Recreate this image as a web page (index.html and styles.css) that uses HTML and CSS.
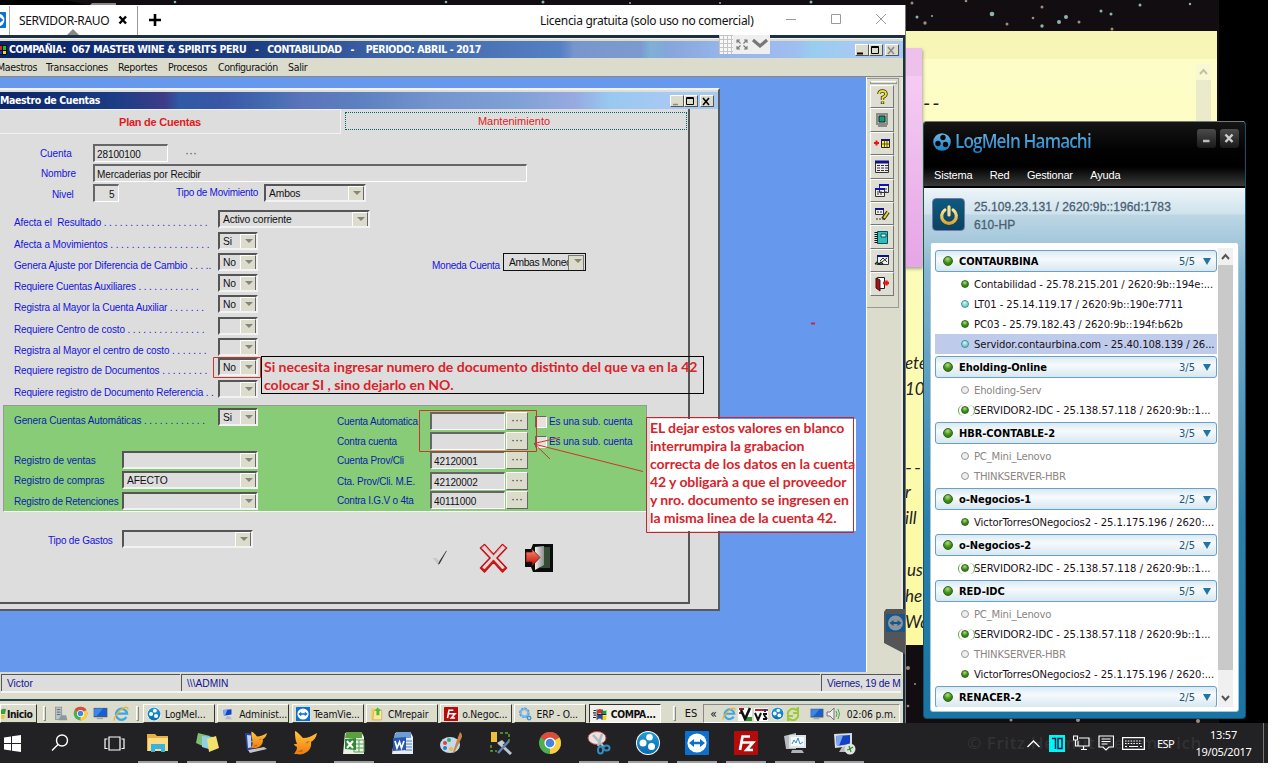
FILE: index.html
```html
<!DOCTYPE html>
<html lang="es">
<head>
<meta charset="utf-8">
<title>SERVIDOR-RAUO</title>
<link rel="stylesheet" href="styles.css">
</head>
<body>
<svg class="defs" width="0" height="0">
<defs>
<linearGradient id="gBlue" x1="0" y1="0" x2="0" y2="1"><stop offset="0" stop-color="#1d9cdc"/><stop offset="1" stop-color="#0a6cae"/></linearGradient>
<linearGradient id="gLogo" x1="0" y1="0" x2="0" y2="1"><stop offset="0" stop-color="#6db8e6"/><stop offset="1" stop-color="#1b7ec2"/></linearGradient>
<linearGradient id="gGold" x1="0" y1="0" x2="0" y2="1"><stop offset="0" stop-color="#ffe79a"/><stop offset="1" stop-color="#e0a52a"/></linearGradient>
<linearGradient id="gFox" x1="0" y1="0" x2="0" y2="1"><stop offset="0" stop-color="#ffc93c"/><stop offset="1" stop-color="#f07a10"/></linearGradient>
<linearGradient id="gDoor" x1="0" y1="0" x2="1" y2="0"><stop offset="0" stop-color="#eee"/><stop offset="1" stop-color="#8d908c"/></linearGradient>
<linearGradient id="gRed" x1="0" y1="0" x2="0" y2="1"><stop offset="0" stop-color="#ff8a70"/><stop offset="1" stop-color="#b80a00"/></linearGradient>
<symbol id="hamachi" viewBox="0 0 24 24"><circle cx="12" cy="12" r="12" fill="#fff"/><circle cx="12" cy="12" r="11" fill="url(#gBlue)"/><circle cx="13.5" cy="6.3" r="3.3" fill="#fff"/><circle cx="7" cy="12" r="3.5" fill="#fff"/><circle cx="15.500" cy="15.5" r="3.5" fill="#fff"/></symbol>
<symbol id="teamviewer" viewBox="0 0 24 24"><rect width="24" height="24" rx="1" fill="#0d6fd0"/><circle cx="12" cy="12" r="9.6" fill="#fff"/><path d="M4 12l5-4v2.800h6V8l5 4-5 4v-2.800H9V16z" fill="#0d6fd0"/></symbol>
<symbol id="filezilla" viewBox="0 0 24 24"><rect width="24" height="24" rx="1" fill="#b50b0b"/><path d="M6 19L8.500 5.500H16M7.500 11.500h5M12 11.500h7L12.500 19H19" fill="none" stroke="#fff" stroke-width="2.700"/></symbol>
<symbol id="chrome" viewBox="0 0 24 24"><circle cx="12" cy="12" r="11" fill="#4caf50"/><path d="M12 12L2.500 6.500A11 11 0 0 1 21.500 6.500z" fill="#dd4b3a"/><path d="M12 12L21.500 6.500A11 11 0 0 1 12 23z" fill="#fdce3f"/><circle cx="12" cy="12" r="5.600" fill="#fff"/><circle cx="12" cy="12" r="4.300" fill="#4285e4"/></symbol>
<symbol id="ie" viewBox="0 0 24 24"><path d="M20 16.500a8.300 8.300 0 1 1 1-5H6" fill="none" stroke="#37a8e8" stroke-width="3.600"/><path d="M2 22C0 18 9 6 17 2.500c4-1.500 6 0 5 3" fill="none" stroke="#eeb32c" stroke-width="2"/></symbol>
<symbol id="fox" viewBox="0 0 24 24"><path d="M2 0c3 1 6 5 8 7 5 0 9-2 14-5-1 5-3 7-6 9 1 5-2 10-8 12-3 1-7 0-9 0 2-3 3-4 3-7-2-1-3-2-3-3h3C2 9 2 4 2 0z" fill="url(#gFox)"/><path d="M13 11l4-1-3 2.500zM4 21l5-2.500 1 2" fill="#b86414"/></symbol>
<symbol id="monitor" viewBox="0 0 24 24"><path d="M2 3l18-1v13L3 17z" fill="#d9dde0"/><path d="M4 5l14-1v9L5 15z" fill="#1541c4"/><path d="M4 5l7-.500L7 15H5z" fill="#7ba7f0"/><path d="M10 16h5l4 5H7z" fill="#b6babd"/></symbol>
<symbol id="desk" viewBox="0 0 24 24"><path d="M1 3h22v15H1z" fill="#4a5d70"/><path d="M2 4h20v12H2z" fill="#1a5fd0"/><path d="M2 4h14L6 16H2z" fill="#3f86ea"/><path d="M6 20h10" stroke="#9aa" stroke-width="2"/></symbol>
<symbol id="server" viewBox="0 0 24 24"><rect x="4" y="1" width="10" height="20" fill="#bcc3c6" stroke="#78828a"/><path d="M6 5h6M6 9h6M6 13h6" stroke="#5a6770" stroke-width="1.500"/><path d="M8 22l5-8h8l2 8z" fill="#8b98a2"/></symbol>
<symbol id="winflag" viewBox="0 0 24 24"><path d="M8 5q4-3 7 0v7q-3-3-7 0z" fill="#e32a20"/><path d="M16 5q4 3 7 0v7q-3 3-7 0z" fill="#17a03b"/><path d="M8 14q4-3 7 0v7q-3-3-7 0z" fill="#2345c9"/><path d="M16 14q4 3 7 0v7q-3 3-7 0z" fill="#f2d21c"/><path d="M7 4v18M15.500 4v18M7 13h16" stroke="#111" stroke-width="1.500" fill="none"/><path d="M1 6h4M0 10h5M1 14h4M0 18h5" stroke="#223" stroke-width="2"/></symbol>
<symbol id="gear" viewBox="0 0 24 24"><circle cx="11" cy="10" r="7" fill="none" stroke="#4b93d3" stroke-width="4" stroke-dasharray="4 1.300"/><circle cx="11" cy="10" r="6" fill="none" stroke="#7bb8ea" stroke-width="3"/><circle cx="19" cy="19" r="3" fill="none" stroke="#4b93d3" stroke-width="2.500"/></symbol>
<symbol id="folder" viewBox="0 0 24 24"><path d="M2 3h14v20H2z" fill="#f0cf67"/><path d="M7 5h13v17H5z" fill="#fbe9a2" stroke="#c79d31"/><path d="M13 1l6 6h-3v7h-5V7H8z" fill="#50bb32"/></symbol>
<symbol id="power" viewBox="0 0 24 24"><path d="M7.500 6.500a8 8 0 1 0 9 0" fill="none" stroke="url(#gGold)" stroke-width="3.500" stroke-linecap="round"/><path d="M12 3v9" stroke="#ffe08a" stroke-width="3.500" stroke-linecap="round"/></symbol>
</defs>
</svg>
<main class="desktop">
<svg class="stars" width="1268" height="763"><g fill="#8fb3b0"><circle cx="917" cy="17" r="1.500"/><circle cx="932" cy="16" r="1"/><circle cx="992" cy="14" r="2.300"/><circle cx="1066" cy="17" r="2"/><circle cx="1059" cy="22" r="2"/><circle cx="1101" cy="11" r="1.500"/><circle cx="1111" cy="14" r="1.500"/><circle cx="1140" cy="5" r="1.500"/><circle cx="1190" cy="4" r="1.200"/><circle cx="1042" cy="26" r="1.700"/><circle cx="175" cy="2" r="1.300"/><circle cx="446" cy="2" r="1.300"/><circle cx="543" cy="2" r="1.500"/><circle cx="630" cy="3" r="1"/><circle cx="720" cy="3" r="1"/><circle cx="811" cy="2" r="1.500"/></g><g fill="#a18b7c"><circle cx="912" cy="3" r="1.500"/><circle cx="925" cy="23" r="1.700"/><circle cx="1007" cy="24" r="1.500"/><circle cx="1033" cy="18" r="1.300"/><circle cx="1079" cy="22" r="1.500"/><circle cx="966" cy="1" r="1.300"/><circle cx="1042" cy="7" r="1.500"/><circle cx="1112" cy="29" r="1.500"/><circle cx="908" cy="668" r="2"/><circle cx="915" cy="684" r="1"/><circle cx="908" cy="706" r="1.300"/><circle cx="1011" cy="720" r="1.500"/><circle cx="1078" cy="720" r="2"/><circle cx="1198" cy="721" r="2"/></g><path d="M1219 0h49v763h-49z" fill="#000"/><path d="M0 0h65l22 5H0z" fill="#000"/><path d="M92 3h24v2H90z" fill="#888"/></svg>

<section class="note yellow">
  <div class="note-head"></div>
  <div class="note-body">
    <div class="note-text"><p class="dashes">--</p><p class="n2">ete</p><p class="n3">10</p><p class="n4">--</p><p class="n5">r</p><p class="n6">ill</p><p class="n7">us</p><p class="n8">he</p><p class="n9">Wa</p></div>
    <div class="note-scroll"><svg width="15" height="16"><path d="M4 10l3.500-4 3.500 4" fill="none" stroke="#c3c29c" stroke-width="2"/></svg></div>
  </div>
</section>
<section class="note pink"><div class="note-head"></div></section>

<section class="tv">
  <header class="tv-tabs">
    <div class="tv-logo"><svg width="16" height="16"><use href="#teamviewer"/></svg></div>
    <div class="tv-tab"><span class="t-tab">SERVIDOR-RAUO</span><svg width="10" height="10"><path d="M1.500 1.500l6.500 7M8 1.500l-6.500 7" stroke="#000" stroke-width="2.400"/></svg><i class="notch"></i></div>
    <div class="tv-plus"><svg width="12" height="12"><path d="M6 0v12M0 6h12" stroke="#000" stroke-width="2.600"/></svg></div>
    <span class="t-lic">Licencia gratuita (solo uso no comercial)</span>
    <svg class="tv-ctl" width="106" height="14" fill="none" stroke="#999"><path d="M0 6.500h10M45.500 1.500h9v9h-9zM90 1l10 10M100 1L90 11"/></svg>
  </header>
  <div class="remote">
    <div class="r-title"><svg width="9" height="12"><rect x="0" y="1" width="7" height="10" fill="#111"/><path d="M0 2h2v4H0z" fill="#d22"/><path d="M3 2h3v4H3z" fill="#2b2"/><path d="M3 7h3v3H3z" fill="#dd2"/><path d="M0 7h2v3H0z" fill="#23c"/></svg><span class="t-comp">COMPAÑIA:&nbsp; 067 MASTER WINE &amp; SPIRITS PERU&nbsp;&nbsp; -&nbsp;&nbsp; CONTABILIDAD&nbsp;&nbsp; -&nbsp;&nbsp;&nbsp; PERIODO: ABRIL - 2017</span>
      <div class="w-btns"><b class="wb"><svg width="13" height="11"><path d="M2 8.500h6" stroke="#000" stroke-width="2"/></svg></b><b class="wb"><svg width="13" height="11"><path d="M2.500 1.500h7v7h-7zM2 2.500h8" fill="none" stroke="#000"/></svg></b><b class="wb gap"><svg width="13" height="11"><path d="M3 2l6 7M9 2L3 9" stroke="#888" stroke-width="1.500"/></svg></b></div>
    </div>
    <nav class="r-menu"><span class="m1">Maestros</span><span class="m2">Transacciones</span><span class="m3">Reportes</span><span class="m4">Procesos</span><span class="m5">Configuración</span><span class="m6">Salir</span></nav>
    <div class="mdi">
      <div class="mdi-area">
        <section class="dialog">
          <div class="d-title"><span>Maestro de Cuentas</span><div class="w-btns"><b class="wb"><svg width="13" height="11"><path d="M3 8.500h5" stroke="#888" stroke-width="1.500"/></svg></b><b class="wb"><svg width="13" height="11"><path d="M2.500 1.500h7v7h-7zM2 2.500h8" fill="none" stroke="#000"/></svg></b><b class="wb gap"><svg width="13" height="11"><path d="M3 2l6 7M9 2L3 9" stroke="#000" stroke-width="1.600"/></svg></b></div></div>
          <div class="panel">
            <div class="tabs"><div class="tab on">Plan de Cuentas</div><div class="tab focus">Mantenimiento</div></div>
            <div class="row r1"><label class="lb a1">Cuenta</label><div class="fld w75">28100100</div><span class="dots">···</span></div>
            <div class="row r2"><label class="lb a2">Nombre</label><div class="fld w433">Mercaderias por Recibir</div></div>
            <div class="row r3"><label class="lb a3">Nivel</label><div class="fld w26">5</div><label class="lb a4">Tipo de Movimiento</label><div class="combo w101">Ambos</div></div>
            <div class="split">
              <div class="opts">
                <div class="row"><label class="lb"><span class="s1">Afecta el&nbsp; Resultado . . . . . . . . . . . . . . . . . . . .</span></label><div class="combo w151">Activo corriente</div></div>
                <div class="row"><label class="lb"><span class="s2">Afecta a Movimientos . . . . . . . . . . . . . . . . . . .</span></label><div class="combo w40">Si</div></div>
                <div class="row"><label class="lb"><span class="s3">Genera Ajuste por Diferencia de Cambio . . . ..</span></label><div class="combo w40">No</div></div>
                <div class="row"><label class="lb"><span class="s4">Requiere Cuentas Auxiliares . . . . . . . . . . . .</span></label><div class="combo w40">No</div></div>
                <div class="row"><label class="lb"><span class="s5">Registra al Mayor la Cuenta Auxiliar . . . . . . .</span></label><div class="combo w40">No</div></div>
                <div class="row"><label class="lb"><span class="s6">Requiere Centro de costo . . . . . . . . . . . . . . .</span></label><div class="combo w40"></div></div>
                <div class="row"><label class="lb"><span class="s7">Registra al Mayor el centro de costo . . . . . . .</span></label><div class="combo w40"></div></div>
                <div class="row"><label class="lb"><span class="s8">Requiere registro de Documentos . . . . . . . . .</span></label><div class="combo w40">No</div></div>
                <div class="row"><label class="lb"><span class="s9">Requiere registro de Documento Referencia . .</span></label><div class="combo w40"></div></div>
              </div>
              <div class="row moneda"><label class="lb">Moneda Cuenta</label><div class="combo flat">Ambas Monec</div></div>
            </div>
            <div class="green">
              <div class="g-left">
                <div class="row g1"><label class="lb"><span class="s10">Genera Cuentas Automáticas . . . . . . . . . . . .</span></label><div class="combo w40">Si</div></div>
                <div class="row g2"><label class="lb"><span>Registro de ventas</span></label><div class="combo w136"></div></div>
                <div class="row g3"><label class="lb"><span>Registro de compras</span></label><div class="combo w136">AFECTO</div></div>
                <div class="row g4"><label class="lb"><span class="s11">Registro de Retenciones</span></label><div class="combo w136"></div></div>
              </div>
              <div class="g-right">
                <div class="row"><label class="lb">Cuenta Automatica</label><div class="fld w75"></div><b class="btn">···</b><i class="chk"></i><label class="lb sub">Es una sub. cuenta</label></div>
                <div class="row"><label class="lb">Contra cuenta</label><div class="fld w75"></div><b class="btn">···</b><i class="chk"></i><label class="lb sub">Es una sub. cuenta</label></div>
                <div class="row"><label class="lb">Cuenta Prov/Cli</label><div class="fld w75">42120001</div><b class="btn">···</b></div>
                <div class="row"><label class="lb">Cta. Prov/Cli. M.E.</label><div class="fld w75">42120002</div><b class="btn">···</b></div>
                <div class="row"><label class="lb">Contra I.G.V o 4ta</label><div class="fld w75">40111000</div><b class="btn">···</b></div>
              </div>
            </div>
            <div class="foot">
              <div class="row"><label class="lb">Tipo de Gastos</label><div class="combo w131"></div></div>
              <div class="acts">
                <svg width="15" height="16"><path d="M0 8l5 7 1-4-3-3z" fill="#c6c6c6"/><path d="M5 14.500L6.500 11 13 1 14 .5 6.500 14z" fill="#333"/></svg>
                <svg width="29" height="30" stroke-linejoin="round"><path d="M1.500 5l4-3.500 9 10 9-10 4 3.500-9.500 10 9.500 10-4 4-9-10-9 10-4-4L11 15z" fill="#e0d8d8" stroke="#c50d12" stroke-width="1.600"/><path d="M2.500 24.500l3 3 9-10 9 10 3-3" fill="none" stroke="#d01a1a" stroke-width="1.500"/><path d="M2.500 5l3-2.500 9 10 9-10 3 2.500" fill="none" stroke="#f59a96" stroke-width="1"/></svg>
                <svg width="30" height="30"><path d="M9 1h20v28H9l-2-5H1V6h6z" fill="#0a0d0a"/><path d="M20 4h6v21H16z" fill="#344b34"/><path d="M11 4l9-1v19l-9 5z" fill="url(#gDoor)"/><path d="M2 9h6V6l8 8.500L8 23v-4H2z" fill="url(#gRed)" stroke="#5b0b05" stroke-width=".7"/></svg>
              </div>
            </div>
          </div>
        </section>
      </div>
      <aside class="tools">
        <div class="tools-box"><div class="grip"></div>
        <b><svg width="16" height="16"><path d="M5 5q0-3 3.500-3T12 5q0 2-3.500 3.500V11M8.500 12.500v2.500" fill="none" stroke="#332" stroke-width="3.400"/><path d="M5 5q0-3 3.500-3T12 5q0 2-3.500 3.500V11M8.500 12.800v1.800" fill="none" stroke="#eee02c" stroke-width="1.800"/></svg></b>
        <b><svg width="16" height="16"><path d="M3 2h10v10H3zM4 14h9" fill="#c3c3bd" stroke="#8b8b87" stroke-width="2"/><path d="M5 4h6v6H5z" fill="#0d9a74" stroke="#122"/></svg></b>
        <b><svg width="16" height="16"><path d="M0 8h5M2.500 5.500v5" stroke="#f01515" stroke-width="2"/><path d="M7.500 4.500h8v8h-8z" fill="#ffef35" stroke="#222"/><path d="M7 5h9" stroke="#118" stroke-width="2"/><path d="M10.500 6v6M13 6v6M8 9h8" stroke="#222" stroke-width=".7"/></svg></b>
        <b><svg width="16" height="16"><path d="M1.500 2.500h13v11h-13z" fill="#eee" stroke="#333"/><path d="M1 3h14" stroke="#118" stroke-width="3"/><path d="M3 6.500h11M3 9h11M3 11.500h11" stroke="#333" stroke-dasharray="3 1"/></svg></b>
        <b><svg width="16" height="16"><path d="M5.500 2.500h9v8h-9zM1.500 6.500h9v8h-9z" fill="#eee" stroke="#333"/><path d="M5 3h10M1 7h10" stroke="#11b" stroke-width="2"/><path d="M3 10h6M3 12h6M12 6v4" stroke="#333" stroke-dasharray="2 1"/></svg></b>
        <b><svg width="16" height="16"><path d="M1.500 2.500h8v6h-8z" fill="#eee" stroke="#333"/><path d="M1 3h9" stroke="#118" stroke-width="2"/><path d="M3 6h6M2 13h9" stroke="#333" stroke-dasharray="2 1"/><path d="M14 6l-5 7" stroke="#332" stroke-width="4"/><path d="M14 6l-4 6" stroke="#e6d62d" stroke-width="2"/></svg></b>
        <b><svg width="16" height="16"><path d="M3.500 2.500h10v12h-10z" fill="#3bb" stroke="#055"/><path d="M2 3v11" stroke="#111" stroke-width="3" stroke-dasharray="1 1"/><path d="M7 5h5v3H7z" fill="#dff" stroke="#055"/></svg></b>
        <b><svg width="16" height="16"><path d="M3.500 3.500h11v9h-11z" fill="#eee" stroke="#333"/><path d="M3 4h12" stroke="#118" stroke-width="2"/><path d="M6 9l3-3 4 4M8 10l5-4" stroke="#333" fill="none"/><path d="M1 12q2-4 4 0 2-4 4 0z" fill="#3bb" stroke="#111"/></svg></b>
        <b><svg width="16" height="16"><path d="M3.500 1.500h7v11h-7z" fill="#fff" stroke="#222"/><path d="M2 2l4 2v11l-4-3z" fill="#a01414" stroke="#411"/><path d="M9 7h6M12.500 4.500v5" stroke="#f01515" stroke-width="2.400"/></svg></b>
        </div>
      </aside>
    </div>
    <div class="status"><span class="c1">Victor</span><span class="c2">\\\ADMIN</span><span class="c3">Viernes, 19 de M</span></div>
    <footer class="xp">
      <b class="start"><svg width="6" height="12"><path d="M0 2q2-2 5-1L4 6H0z" fill="#3ba03b"/><path d="M0 7h4l-1 4H0z" fill="#edc52c"/></svg>Inicio</b>
      <i class="sep"></i>
      <div class="ql"><svg width="15" height="16"><use href="#server"/></svg><svg width="15" height="15"><use href="#chrome"/></svg><svg width="15" height="15"><use href="#desk"/></svg><svg width="16" height="16"><use href="#ie"/></svg></div>
      <i class="sep s2"></i>
      <div class="tasks">
      <b><svg width="14" height="14"><use href="#hamachi"/></svg><span>LogMeI...</span></b>
      <b><svg width="14" height="14"><use href="#monitor"/></svg><span>Administ...</span></b>
      <b><svg width="14" height="14"><use href="#teamviewer"/></svg><span>TeamVie...</span></b>
      <b><svg width="14" height="14"><use href="#folder"/></svg><span>CMrepair</span></b>
      <b><svg width="14" height="14"><use href="#filezilla"/></svg><span>o.Negoc...</span></b>
      <b><svg width="14" height="14"><use href="#gear"/></svg><span>ERP - O...</span></b>
      <b class="down"><svg width="14" height="14"><use href="#winflag"/></svg><span>COMPA...</span></b>
      </div>
      <i class="sep s3"></i><span class="es">ES</span>
      <div class="xtray"><span>«</span><svg width="14" height="14"><use href="#ie"/></svg><svg width="14" height="14"><path d="M0 1h14v13H0z" fill="#fff"/><path d="M8 14h6v-4H8z" fill="#393"/><path d="M1 2h5M1 6h3" stroke="#922" stroke-width="2"/><path d="M3 3l4 9 5-11" fill="none" stroke="#111" stroke-width="2.600"/></svg><svg width="15" height="14"><path d="M0 1h14v13H0z" fill="#fff"/><path d="M1 3h13" stroke="#b22" stroke-width="2"/><path d="M10 2h2v3h-2z" fill="#22b"/><path d="M1 6l3 7 3-7M9 7h4M9 12h4M10 8l3 4" fill="none" stroke="#111" stroke-width="2"/></svg><svg width="13" height="13"><use href="#hamachi"/></svg><svg width="14" height="14"><path d="M2 8a5 5 0 0 1 8-5l2-2v5H7M12 7a5 5 0 0 1-8 5l-2 2V9h5" fill="none" stroke="#9c3" stroke-width="2"/></svg><svg class="sp" width="14" height="14"><use href="#desk"/></svg><svg width="15" height="14"><path d="M1 5h3l4-4v12L4 9H1z" fill="#eee" stroke="#777"/><path d="M10 4q2 3 0 6M12 2q3 5 0 10" fill="none" stroke="#4a4"/></svg><span class="clk">02:06 p.m.</span></div>
    </footer>
  </div>
  <div class="fs"><i></i><svg width="37" height="18" fill="none" stroke="#777"><path d="M4 8V5h3M11 5h3v3M14 11v3h-3M7 14H4v-3M4.500 5.500l3 3M13.500 5.500l-3 3M13.500 13.500l-3-3M4.500 13.500l3-3" stroke-width="1.100"/><path d="M20 5l7 6 7-6" stroke-width="3.200" stroke="#777"/></svg></div>
  <div class="tv-grip"><svg width="22" height="46"><path d="M3 1h19v45L1 35V4z" fill="#535557"/><rect x="3" y="6" width="19" height="18" fill="#15568c"/><circle cx="12.500" cy="15" r="7.500" fill="#8d9499"/><path d="M6.500 15l4-3v2h4v-2l4 3-4 3v-2h-4v2z" fill="#15568c"/></svg></div>
</section>

<div class="ann ann1">Si necesita ingresar numero de documento distinto del que va en la 42<br>colocar SI , sino dejarlo en NO.</div>
<div class="ann ann2"><div>EL dejar estos valores en blanco<br>interrumpira la grabacion<br>correcta de los datos en la cuenta<br>42 y obligarà a que el proveedor<br>y nro. documento se ingresen en<br>la misma linea de la cuenta 42.</div></div>
<svg class="marks" width="900" height="600" fill="none" stroke="#c9372c"><path d="M213.500 357.500h47v20h-47z"/><path d="M419.500 410.500h117v41h-117zM643 471.500L534 444M560 437.500L534 443.500 550 459"/><path d="M646.500 417.500h207v115h-207z" stroke="#c9232c"/><path d="M811 323.500h4" stroke="#c22b44" stroke-width="2"/></svg>

<section class="ham">
  <header class="h-head">
    <div class="h-brand"><svg width="18" height="18" viewBox="0 0 18 18"><circle cx="9" cy="9" r="8.800" fill="url(#gLogo)"/><circle cx="10" cy="4.500" r="2.700" fill="#06090c"/><circle cx="5" cy="10.500" r="2.700" fill="#06090c"/><circle cx="12.500" cy="11.500" r="2.700" fill="#06090c"/></svg><span class="h-logo">LogMeIn Hamachi</span><div class="h-ctl"><b><svg width="18" height="18"><path d="M6 12h6.500" stroke="#bbb" stroke-width="2.600"/></svg></b><b><svg width="18" height="18"><path d="M5.500 5.500l7 7.500M12.500 5.500l-7 7.500" stroke="#ccc" stroke-width="2.500"/></svg></b></div></div>
    <nav class="h-nav"><span>Sistema</span><span>Red</span><span>Gestionar</span><span>Ayuda</span></nav>
  </header>
  <div class="h-info"><div class="h-pow"><svg width="22" height="22"><use href="#power"/></svg></div><div class="h-ip">25.109.23.131 / 2620:9b::196d:1783<br><span>610-HP</span></div></div>
  <div class="h-list">
    <div class="h-groups">
      <div class="grp"><h4><i class="dot"></i><span>CONTAURBINA</span><em>5/5</em><i class="tri"></i></h4><p><i class="dot"></i><span class="l1">Contabilidad - 25.78.215.201 / 2620:9b::194e:...</span></p><p><i class="dot cy"></i><span>LT01 - 25.14.119.17 / 2620:9b::190e:7711</span></p><p><i class="dot"></i><span>PC03 - 25.79.182.43 / 2620:9b::194f:b62b</span></p><p class="sel"><i class="dot cy"></i><span>Servidor.contaurbina.com - 25.40.108.139 / 26...</span></p></div>
      <div class="grp"><h4><i class="dot"></i><span>Eholding-Online</span><em>3/5</em><i class="tri"></i></h4><p class="off"><i class="dot"></i><span>Eholding-Serv</span></p><p><i class="dot par"></i><span class="l2">SERVIDOR2-IDC - 25.138.57.118 / 2620:9b::1...</span></p></div>
      <div class="grp"><h4><i class="dot"></i><span>HBR-CONTABLE-2</span><em>3/5</em><i class="tri"></i></h4><p class="off"><i class="dot"></i><span>PC_Mini_Lenovo</span></p><p class="off"><i class="dot"></i><span>THINKSERVER-HBR</span></p></div>
      <div class="grp"><h4><i class="dot"></i><span>o-Negocios-1</span><em>2/5</em><i class="tri"></i></h4><p><i class="dot"></i><span>VictorTorresONegocios2 - 25.1.175.196 / 2620:...</span></p></div>
      <div class="grp"><h4><i class="dot"></i><span>o-Negocios-2</span><em>2/5</em><i class="tri"></i></h4><p><i class="dot par"></i><span class="l2">SERVIDOR2-IDC - 25.138.57.118 / 2620:9b::1...</span></p></div>
      <div class="grp"><h4><i class="dot"></i><span>RED-IDC</span><em>5/5</em><i class="tri"></i></h4><p class="off"><i class="dot"></i><span>PC_Mini_Lenovo</span></p><p><i class="dot par"></i><span class="l2">SERVIDOR2-IDC - 25.138.57.118 / 2620:9b::1...</span></p><p class="off"><i class="dot"></i><span>THINKSERVER-HBR</span></p><p><i class="dot"></i><span>VictorTorresONegocios2 - 25.1.175.196 / 2620:...</span></p></div>
      <div class="grp"><h4><i class="dot"></i><span>RENACER-2</span><em>2/5</em><i class="tri"></i></h4></div>
    </div>
    <div class="h-scroll"><svg width="15" height="17"><path d="M4 11l3.500-4 3.500 4" fill="none" stroke="#555" stroke-width="2"/></svg><i></i><svg width="15" height="37"><path d="M4 26l3.500 4 3.500-4" fill="none" stroke="#555" stroke-width="2"/></svg></div>
  </div>
</section>

<footer class="w10">
  <div class="apps">
    <b class="b1"><svg width="17" height="17" fill="#fff"><path d="M0 2.500L7 1.500V8H0zM8 1.300L17 0v8H8zM0 9h7v6.500L0 14.500zM8 9h9v8l-9-1.300z"/></svg></b>
    <b class="b2"><svg width="18" height="18" fill="none" stroke="#fff" stroke-width="1.400"><circle cx="11" cy="6.500" r="5.500"/><path d="M7 10.500l-6 6"/></svg></b>
    <b class="b3"><svg width="21" height="15" fill="none" stroke="#fff" stroke-width="1.200"><path d="M5 1h11v13H5zM3.500 3H1v9.500h2.500M17.500 3H20v9.500h-2.500"/></svg></b>
    <b class="open"><svg width="24" height="24"><path d="M1 3h8l2 2h11v15H1z" fill="#e5b144"/><path d="M2 7h20v13H2z" fill="#fbdc83"/><path d="M5 21v-8h14v8h-4v-3H9v3z" fill="#36b2e4"/></svg></b>
    <b class="open"><svg width="24" height="24"><path d="M3 2l12 3-3 12-11-5z" fill="#7fbf75"/><path d="M7 5l12 1-2 13-10-3z" fill="#8fd0e6"/><path d="M12 8l9-3 3 12-10 4z" fill="#f3e16c"/></svg></b>
    <b class="open"><svg width="24" height="24"><path d="M1 2l11 1v14l-9 2z" fill="#2747a8"/><path d="M3 4l4 .5v12l-3 .5z" fill="#c2d2f5"/><path d="M4 19l16-3 3 2-17 4z" fill="#c3c5c8"/><use href="#fox" x="6" y="0" width="17" height="18"/></svg></b>
    <b><svg width="24" height="24"><use href="#fox"/></svg></b>
    <b class="open"><svg width="24" height="24"><path d="M3 2h17l2 4v17H1z" fill="#e9f1e5"/><path d="M4 1h16v6H3z" fill="#5c9f3f"/><path d="M12 9h10v12H12zM12 13h10M12 17h10M17 9v12" fill="none" stroke="#58a05b"/><path d="M3 8l11-1v12L3 18z" fill="#2e8a38"/><path d="M5 10l6 7M11 10l-6 7" stroke="#fff" stroke-width="2"/></svg></b>
    <b><svg width="24" height="24"><path d="M4 2h16l2 4v17H1z" fill="#e6edf6"/><path d="M5 1h15v6H3z" fill="#6f9cd6"/><path d="M14 10h7M14 13h7M14 16h7M14 19h7" stroke="#4b7fc6"/><path d="M2 7l13-1v13L2 20z" fill="#2759a8"/><path d="M4 10l2 7 2.500-6 2 6 2.500-7" fill="none" stroke="#fff" stroke-width="1.700"/></svg></b>
    <b><svg width="24" height="24"><ellipse cx="10" cy="14" rx="10" ry="8" fill="#c4daea"/><circle cx="5" cy="12" r="2" fill="#d43"/><circle cx="9" cy="9" r="2" fill="#3a7"/><circle cx="5" cy="17" r="2" fill="#37c"/><circle cx="11" cy="18" r="2" fill="#eb3"/><path d="M20 1q4 3 0 9L14 22l-1-1 4-12z" fill="#c98444"/></svg></b>
    <b><svg width="24" height="24"><path d="M2 1h6v10H2z" fill="#f0bd38"/><path d="M11 2h9v8M2 14v6h6" fill="none" stroke="#5a3" stroke-dasharray="3 2" stroke-width="1.500"/><path d="M10 12l12 11" stroke="#b9c4cf" stroke-width="3"/><path d="M20 10L9 22" stroke="#5f84b1" stroke-width="2.500"/><path d="M8 12l5-3 3 3-4 3z" fill="#c7cdd3"/></svg></b>
    <b><svg width="24" height="24"><use href="#chrome"/></svg></b>
    <b class="open"><svg width="24" height="24"><ellipse cx="10" cy="7" rx="9" ry="6.500" fill="#e9e4e4" stroke="#c14545"/><path d="M6 4l11 12M15 3l-4 12" stroke="#b3b8bd" stroke-width="2.500"/><ellipse cx="13.500" cy="19" rx="2.500" ry="3.500" fill="none" stroke="#328dbd" stroke-width="2"/><ellipse cx="19.500" cy="17" rx="3" ry="2.500" fill="none" stroke="#328dbd" stroke-width="2"/></svg></b>
    <b class="open"><svg width="24" height="24"><use href="#hamachi"/></svg></b>
    <b class="open"><svg width="24" height="24"><use href="#teamviewer"/></svg></b>
    <b class="open"><svg width="24" height="24"><use href="#filezilla"/></svg></b>
    <b class="open"><svg width="24" height="24"><path d="M1 5l12-3v16H3z" fill="#b7bdc1"/><path d="M6 4h17v13H6z" fill="#dfe3e6"/><path d="M8 6h13v9H8z" fill="#f5fafc"/><path d="M9 13l2-4 2 3 2-5 2 6 3-2" fill="none" stroke="#3a8fc0"/><path d="M9 19h10l2 3H8z" fill="#aeb4b7"/></svg></b>
    <b class="open"><svg width="24" height="24"><use href="#monitor"/><circle cx="18" cy="18" r="5.500" fill="#dfe6df"/><path d="M15 19l3-1-1-3M21 16l-3 2 1 3" fill="none" stroke="#3a8b3a" stroke-width="1.300"/></svg></b>
  </div>
  <span class="wm">© Fritz Helmut Hemmerich</span>
  <div class="tray">
    <svg width="13" height="9"><path d="M.5 8l6-6 6 6" fill="none" stroke="#fff" stroke-width="1.300"/></svg>
    <svg width="16" height="17"><path d="M0 0h16v17H0z" fill="#00f6f6"/><path d="M3 3.500h3.500V14M9 3.500h4v10H9z" fill="none" stroke="#124" stroke-width="1.500"/></svg>
    <svg width="17" height="16" fill="none" stroke="#fff" stroke-width="1.200"><path d="M6 3h10v8H5V6M8 14.500h6M10.500 11v3M.5 1h4v4h-4zM2.500 5v6H5"/></svg>
    <svg width="16" height="17" fill="none" stroke="#fff" stroke-width="1.200"><path d="M1 1h14.500v11H11l-3 3-3-3H1zM3.500 4h9M3.500 6.500h9M3.500 9h6"/></svg>
    <svg class="kb" width="23" height="13" fill="none" stroke="#fff" stroke-width="1.200"><path d="M.6.600h21.800v11.800H.600z"/><path d="M3 4h17M3 6.500h17" stroke-dasharray="1.500 1.300"/><path d="M3 9.500h2M7 9.500h9M18 9.500h2"/></svg>
    <span class="esp">ESP</span>
    <div class="clock">13:57<br><span>19/05/2017</span></div>
    <i class="edge"></i>
  </div>
</footer>
</main>
</body>
</html>
```
FILE: styles.css
```css
* { box-sizing: border-box; }
body { margin: 0; background: #fff; overflow: hidden; font-family: "Liberation Sans", Arial, sans-serif; }
p, h4 { margin: 0; }
i, em { font-style: normal; }
svg { display: block; flex: none; }
span, label { white-space: nowrap; }
.defs { position: absolute; }
.desktop { position: relative; width: 1268px; height: 763px; background: #120d11; overflow: hidden; }
.stars { position: absolute; left: 0; top: 0; }

/* sticky notes */
.note { position: absolute; }
.yellow { left: 903px; top: 31px; width: 314px; height: 614px; background: linear-gradient(#fdfdca, #fcf9a0); }
.yellow .note-head { height: 28px; background: #f8f6b6; }
.note-body { display: flex; justify-content: space-between; padding: 5px 6px 0 2px; }
.note-text { font: italic 17px/26px "Lato", sans-serif; color: #222; }
.note-text p { height: 26px; }
.note-text .dashes { margin: 26px 0 234px 18px; letter-spacing: 2px; height: 26px; font-size: 21px; }
.note-text .n4 { margin-top: 51px; letter-spacing: 2px; font-size: 20px; }
.note-text .n7 { margin-top: 26px; padding-left: 2px; }
.note-scroll { width: 15px; height: 57px; background: #ebebcb; }
.note-scroll svg { background: #f8f8d2; }
.pink { left: 903px; top: 48px; width: 19px; height: 219px; background: linear-gradient(#f7d1f5, #e6a5e6); box-shadow: 1px 2px 3px #6668; }
.pink .note-head { height: 28px; background: #eec0ec; }

/* TeamViewer frame */
.tv { position: absolute; left: 0; top: 5px; width: 906px; height: 718px; background: #1b3042; border-right: 1px solid #777; overflow: hidden; }
.tv-tabs { display: flex; align-items: center; height: 30px; background: #fff; font: 12px "Noto Sans", sans-serif; color: #111; }
.tv-logo { width: 10px; height: 29px; border-right: 1px solid #aaa; display: flex; justify-content: flex-end; align-items: center; overflow: hidden; padding-right: 3px; }
.tv-tab { position: relative; width: 128px; height: 29px; border-right: 1px solid #999; display: flex; align-items: center; padding-left: 9px; gap: 8px; }
.t-tab { width: 91px; letter-spacing: -.35px; }
.notch { position: absolute; left: 57px; bottom: 0; border: 6px solid transparent; border-top: 0; border-bottom-color: #888; }
.tv-plus { margin-left: 11px; }
.t-lic { margin-left: 379px; width: 216px; letter-spacing: -.29px; }
.tv-ctl { margin-left: 30px; }
.remote { width: 903px; margin-top: 3px; background: #dcdccd; border-top: 1px solid #f4f4ec; display: flex; flex-direction: column; height: 685px; }
.r-title { margin-top: 2px; height: 17px; flex: none; display: flex; align-items: center; background: linear-gradient(90deg, #0a246a 0, #1d3d80 28%, #3c62a5 42%, #5580c3 62%, #6a8acb 63%, #7796cd 63.5%, #7b9bd0 71%, #7fb0d6 72%, #85a5dc 74%, #96b5ea 80%, #a0bdf0 88%, #98cdf0 90%, #a9c9f3 95%); color: #fff; }
.t-comp { font: bold 10.500px/14px "DejaVu Sans Condensed", "DejaVu Sans", sans-serif; letter-spacing: -.38px; flex: 1; padding-bottom: 1px; }
.w-btns { display: flex; padding-right: 4px; }
.wb { width: 14px; height: 12px; background: #dcdccd; border: 1px solid; border-color: #fff #555 #555 #fff; }
.wb svg { margin: 0 -1px; }
.wb.gap { margin-left: 2px; }
.r-menu { height: 18px; flex: none; display: flex; align-items: center; padding-bottom: 1px; font: 10.500px "DejaVu Sans Condensed", "DejaVu Sans", sans-serif; color: #111; letter-spacing: -.32px; }
.r-menu .m1 { width: 49px; margin-left: -3px; } .m2 { width: 72px; } .m3 { width: 50px; } .m4 { width: 50px; } .m5 { width: 70px; letter-spacing: -.45px; }
.mdi { display: flex; height: 596px; flex: none; border-top: 1px solid #888; }
.mdi-area { position: relative; width: 866px; background: #6698ed; }
.tools { flex: 1; border-left: 1px solid #fff; border-right: 2px solid #e7e7dd; }
.tools-box { margin: 1px 2px 0 0; height: 230px; padding: 2px 0 0 3px; border: 1px solid #999; border-left: 0; }
.grip { height: 3px; width: 27px; border: 1px solid #999; border-top-color: #fff; margin-bottom: 1px; }
.tools b { display: flex; justify-content: center; align-items: center; width: 24px; height: 23.400px; background: #dedfd2; border: 1px solid; border-color: #fff #777 #777 #fff; }

/* account dialog */
.dialog { position: absolute; left: 0; top: 11px; width: 720px; height: 523px; background: #ddd; border: solid #f2f2ec; border-width: 2px 2px 2px 0; border-right-color: #555b60; border-bottom-color: #555b60; padding-top: 2px; }
.d-title { display: flex; align-items: center; justify-content: space-between; height: 17px; color: #fff; font: bold 10.500px/14px "DejaVu Sans Condensed", "DejaVu Sans", sans-serif; letter-spacing: -.36px; background: linear-gradient(90deg, #0a2468 0, #1b3d86 16%, #3d3c88 23%, #2f5aa6 25%, #3a56a5 31%, #466db2 38%, #5b74bc 42%, #5c80c0 50%, #7394cd 60%, #7fa1d6 72%, #97aae0 80%, #98c9f0 85%, #a5c9f3 92%); }
.d-title span { padding-bottom: 2px; }
.panel { width: 690px; height: 495px; border-right: 2px solid #555; border-bottom: 2px solid #555; display: flex; flex-direction: column; }
.tabs { display: flex; height: 25px; flex: none; color: #e11b1b; text-align: center; gap: 4px; }
.tab.on { width: 341px; font: bold 11px/25px "Liberation Sans", sans-serif; border: 1px solid #f2f2f2; border-left: 0; letter-spacing: -.25px; padding-right: 20px; }
.tab.focus { width: 342px; height: 18px; margin-top: 3px; border: 1px dotted #066; font-size: 11px; line-height: 16px; padding-right: 4px; }
.row { display: flex; align-items: flex-start; }
.lb { color: #1414dc; font-size: 10px; line-height: 11px; flex: none; letter-spacing: -.1px; }
.fld { height: 18px; flex: none; border: solid; border-width: 2px 1px 1px 2px; border-color: #666 #fff #fff #666; font-size: 10px; line-height: 17px; padding-left: 2px; color: #111; background: #ddd; letter-spacing: -.1px; }
.combo { position: relative; flex: none; height: 18px; border: solid; border-width: 2px; border-color: #555 #f2f2f2 #f2f2f2 #555; font-size: 10.300px; line-height: 15px; padding-left: 3px; color: #111; background: #ddd; overflow: hidden; white-space: nowrap; letter-spacing: -.15px; }
.combo::before { content: ""; position: absolute; right: 0; top: 0; width: 14px; height: 14px; background: #dcdccd; border: 1px solid; border-color: #fff #666 #666 #fff; }
.combo::after { content: ""; position: absolute; right: 3px; top: 5px; border: 4px solid transparent; border-top-color: #85857b; border-bottom: 0; }
.w75 { width: 75px; } .w433 { width: 434px; } .w26 { width: 26px; padding-left: 14px; } .w101 { width: 102px; } .w151 { width: 152px; } .w40 { width: 40px; } .w136 { width: 136px; } .w131 { width: 131px; }
.r1 { margin-top: 10px; } .r2, .r3 { margin-top: 2px; }
.a1 { padding: 4px 0 0 40px; width: 93px; } .a2 { padding: 4px 0 0 41px; width: 93px; } .a3 { padding: 5px 0 0 52px; width: 93px; } .a4 { padding: 3px 0 0 57px; width: 145px; letter-spacing: -.27px; }
.dots { margin-left: 17px; font-size: 12px; line-height: 18px; color: #555; }
.split { display: flex; margin-top: 8px; }
.opts { display: grid; grid-template-rows: 22px 21px 21px 21px 22px 21px 20px 22px 18px; width: 370px; }
.opts .lb, .g1 .lb { width: 218px; padding: 7px 0 0 14px; }
.s1 { letter-spacing: -.12px; } .s2 { letter-spacing: -.1px; } .s3, .s4, .s5 { letter-spacing: -.16px; } .s6 { letter-spacing: -.13px; } .s7, .s8 { letter-spacing: -.13px; } .s9 { letter-spacing: -.16px; } .s10 { letter-spacing: -.13px; } .s11 { letter-spacing: -.22px; }
.moneda { margin: 43px 0 0 62px; }
.moneda .lb { width: 71px; padding-top: 7px; letter-spacing: -.25px; }
.combo.flat { width: 83px; border: 1px solid #111; height: 18px; line-height: 17px; padding-left: 5px; letter-spacing: -.36px; }
.combo.flat::before { border: 1px solid #777; top: 1px; right: 1px; }
.green { display: flex; margin: 7px 0 0 3px; width: 644px; height: 107px; background: #88cc78; border: 1px solid #999; border-bottom-color: #fff; flex: none; color: #111; }
.green .lb { color: #0a1eae; }
.g-left { width: 333px; }
.g1 { margin: 2px 0 0 -4px; height: 43px; }
.g2, .g3, .g4 { margin-left: -4px; height: 20.400px; }
.g2 .lb, .g3 .lb, .g4 .lb { width: 122px; padding: 4px 0 0 14px; }
.g-right { display: grid; grid-template-rows: 20px 19px 21px 19px 19px; padding-top: 6px; align-content: start; }
.g-right .lb { width: 93px; padding-top: 4px; letter-spacing: -.22px; }
.g-right .lb.sub { width: auto; padding-left: 2px; color: #1414c8; letter-spacing: -.12px; }
.btn { width: 22px; height: 18px; margin-left: 1px; background: #dcdccd; border: 1px solid; border-color: #fff #666 #666 #fff; font: 12px/14px "Liberation Sans", sans-serif; text-align: center; color: #333; }
.chk { width: 12px; height: 12px; margin: 4px 0 0 7px; background: #e8e0dc; border: 1px solid; border-color: #666 #fff #fff #666; border-left-width: 2px; }
.foot { display: flex; margin-top: 18px; }
.foot .lb { width: 122px; padding: 5px 0 0 48px; letter-spacing: -.2px; }
.acts { display: flex; align-items: center; margin: 13px 0 0 180px; height: 30px; gap: 31px; }
.acts svg:last-child { margin-left: -15px; }

/* status bar and XP taskbar */
.status { display: flex; gap: 1px; margin: 2px 2px 0 1px; height: 19px; background: #ddd; font-size: 10.200px; line-height: 17px; color: #14148c; flex: none; overflow: hidden; border-bottom: 2px solid #f4f4ee; }
.status span { border-left: 1px solid #555; border-top: 1px solid #555; padding-left: 5px; overflow: hidden; }
.c1 { width: 179px; } .c2 { width: 639px; } .c3 { flex: 1; letter-spacing: -.2px; }
.xp { margin-top: 6px; height: 25px; padding-top: 2px; border-top: 2px solid #23424d; display: flex; align-items: center; background: #dcdccd; font: 10.300px "DejaVu Sans Condensed", "DejaVu Sans", sans-serif; color: #111; letter-spacing: -.15px; flex: none; }
.start { width: 37px; height: 19px; display: flex; align-items: center; border: 1px solid; border-color: #fff #333 #333 #fff; font-size: 10.300px; letter-spacing: -.5px; }
.sep { width: 3px; height: 15px; border: 1px solid; border-color: #fff #888 #888 #fff; margin-left: 6px; }
.ql { display: flex; gap: 5px; margin-left: 7px; }
.sep.s2 { margin-left: 7px; }
.tasks { display: flex; gap: 2.300px; margin-left: 4px; }
.tasks b { width: 72px; height: 19px; display: flex; align-items: center; gap: 4px; padding-left: 3px; font-weight: normal; border: 1px solid; border-color: #fff #333 #333 #fff; overflow: hidden; }
.tasks .down { border-color: #333 #fff #fff #333; background: #f1f1ea; font-weight: bold; letter-spacing: -.35px; }
.sep.s3 { margin-left: 12px; }
.es { margin-left: 9px; letter-spacing: 0; font-size: 11px; }
.xtray { margin-left: 6px; width: 197px; height: 19px; border: 1px solid; border-color: #888 #fff #fff #888; display: flex; align-items: center; gap: 2px; padding-left: 6px; }
.xtray span { margin-right: 3px; font-size: 12px; }
.xtray .sp { margin-left: 8px; }
.xtray .clk { margin: 0 0 0 4px; font-size: 10.300px; }
.fs { position: absolute; left: 719px; top: 30px; width: 51px; height: 19px; background: #efefef; display: flex; }
.fs i { width: 14px; background: repeating-linear-gradient(#c4c4c4 0 1px, transparent 1px 4px), repeating-linear-gradient(90deg, #c4c4c4 0 1px, #f8f8f8 1px 4px); }
.tv-grip { position: absolute; left: 883px; top: 603px; }

/* annotations */
.ann { position: absolute; color: #d8232a; font: bold 14px/18px "Lato", "Open Sans", sans-serif; white-space: nowrap; }
.ann1 { left: 261px; top: 356px; width: 443px; height: 38px; border: 1px solid #000; padding: 1px 0 0 2px; }
.ann2 { left: 647px; top: 418px; width: 209px; height: 114px; letter-spacing: -.07px; }
.ann2 div { margin: 1px 0 0 3px; width: 206px; height: 112px; background: #fff; }
.marks { position: absolute; left: 0; top: 0; }

/* Hamachi */
.ham { position: absolute; left: 923px; top: 121px; width: 323px; height: 598px; border-radius: 4px; background: linear-gradient(#edf5f8 67px, #cfe2ec 93px, #bdd6e4 94px, #a2c7da 122px, #85b6d0 150px, #2a80aa 400px, #1874a2); overflow: hidden; border: 1px solid #17506c; border-width: 0 1px 1px; }
.h-head { height: 67px; border-top: 1px solid #777; border-bottom: 2px solid #000; background: linear-gradient(#151515, #020202 45%, #000 70%, #3a3a3a); }
.h-brand { display: flex; align-items: center; padding: 5px 6px 0 9px; height: 35px; }
.h-logo { width: 170px; height: 28px; margin: -2px 0 0 4px; font: 600 19.500px/28px "Open Sans", sans-serif; letter-spacing: -1px; transform: scaleX(.88); transform-origin: 0 0; background: linear-gradient(#7cc3ee, #1679bf); background-clip: text; -webkit-background-clip: text; color: transparent; }
.h-ctl { display: flex; gap: 4px; margin: -8px 0 0 auto; }
.h-ctl b { width: 19px; height: 19px; border-radius: 3px; background: linear-gradient(#4b4b4b, #191919); }
.h-nav { display: flex; gap: 17.500px; padding: 12px 0 0 10px; font-size: 11px; line-height: 13px; color: #fff; letter-spacing: -.2px; }
.h-info { height: 54px; display: flex; padding: 10px 0 0 8px; gap: 9px; }
.h-pow { width: 33px; height: 33px; border-radius: 4px; background: linear-gradient(#0d5b80, #0b4261); border: 1px solid #77a; display: flex; align-items: center; justify-content: center; }
.h-ip { font-size: 12px; line-height: 18px; color: #4a6075; -webkit-text-stroke: .3px #4a6075; letter-spacing: .1px; }
.h-list { margin: 0 7px 0 6px; width: 309px; height: 470px; background: #fff; border: 1px solid #a5c8d8; border-radius: 3px; padding: 5px 4px 4px 4px; display: flex; gap: 1px; }
.h-groups { width: 282px; padding-top: 2px; overflow: hidden; font: 11.200px "DejaVu Sans Condensed", "DejaVu Sans", sans-serif; color: #1a1020; }
.grp { padding-bottom: 2px; }
.grp h4 { height: 22px; margin-bottom: 2px; display: flex; align-items: center; border: 1px solid #69a0c4; border-radius: 3px; background: linear-gradient(#d9eaf3, #f6fafc 40%, #d7e8f1); padding: 0 5px 0 7px; font-size: 11px; color: #000; letter-spacing: -.05px; }
.grp h4 span { flex: 1; margin-left: 6px; }
.grp em { font-weight: normal; color: #235574; letter-spacing: 0; }
.dot { width: 10px; height: 10px; border-radius: 50%; background: radial-gradient(circle at 45% 25%, #b0d88f, #3c8c10 55%, #2c7408); border: .5px solid #2c6a12; flex: none; }
.tri { border: 4.500px solid transparent; border-top: 7px solid #1f75a5; border-bottom: 0; margin-left: 8px; }
.grp p { height: 20px; display: flex; align-items: center; padding-left: 25px; letter-spacing: -.1px; white-space: nowrap; }
.grp p .dot { width: 8px; height: 8px; margin-right: 5px; margin-left: 1px; }
.grp p .l2 { letter-spacing: -.02px; }
.grp p .cy { background: radial-gradient(circle at 45% 25%, #d5f5f7, #4db2bb); border-color: #3b939b; }
.grp .par { position: relative; }
.grp .par::before { content: ""; position: absolute; top: -2px; left: -4px; width: 15px; height: 11px; border: solid #6aa04e; border-width: 0 1px; border-radius: 6px; }
.grp .off { color: #8c8684; letter-spacing: -.2px; }
.grp .off .dot { background: #eee; border: 1.500px solid #999; }
.sel { background: #becbea; }
.h-scroll { width: 15px; background: #f0f0f0; display: flex; flex-direction: column; justify-content: space-between; }
.h-scroll i { flex: 1; background: #c9c9c9; }

/* Windows 10 taskbar */
.w10 { position: absolute; left: 0; top: 723px; width: 1268px; height: 40px; background: #222123; display: flex; justify-content: space-between; }
.apps { display: flex; }
.apps b { width: 49px; display: flex; justify-content: center; align-items: center; }
.apps .open { background: linear-gradient(#a0a0a0, #a0a0a0) center bottom / 40px 2px no-repeat; }
.apps .b1 { width: 24px; } .apps .b2 { width: 72px; } .apps .b3 { width: 37px; margin-right: 0; }
.wm { position: absolute; left: 967px; top: 8px; font: 600 17px "Open Sans", sans-serif; color: #333133; letter-spacing: .6px; }
.tray { position: relative; display: flex; align-items: center; color: #fff; font: 11px "Noto Sans", sans-serif; gap: 8px; }
.tray svg:first-child { margin-right: 1px; }
.esp { margin-left: 4px; letter-spacing: -.6px; }
.clock { margin-left: 12px; width: 59px; text-align: center; line-height: 17px; letter-spacing: -.25px; }
.edge { width: 5px; height: 40px; border-left: 1px solid #777; margin-left: 2px; }
```
